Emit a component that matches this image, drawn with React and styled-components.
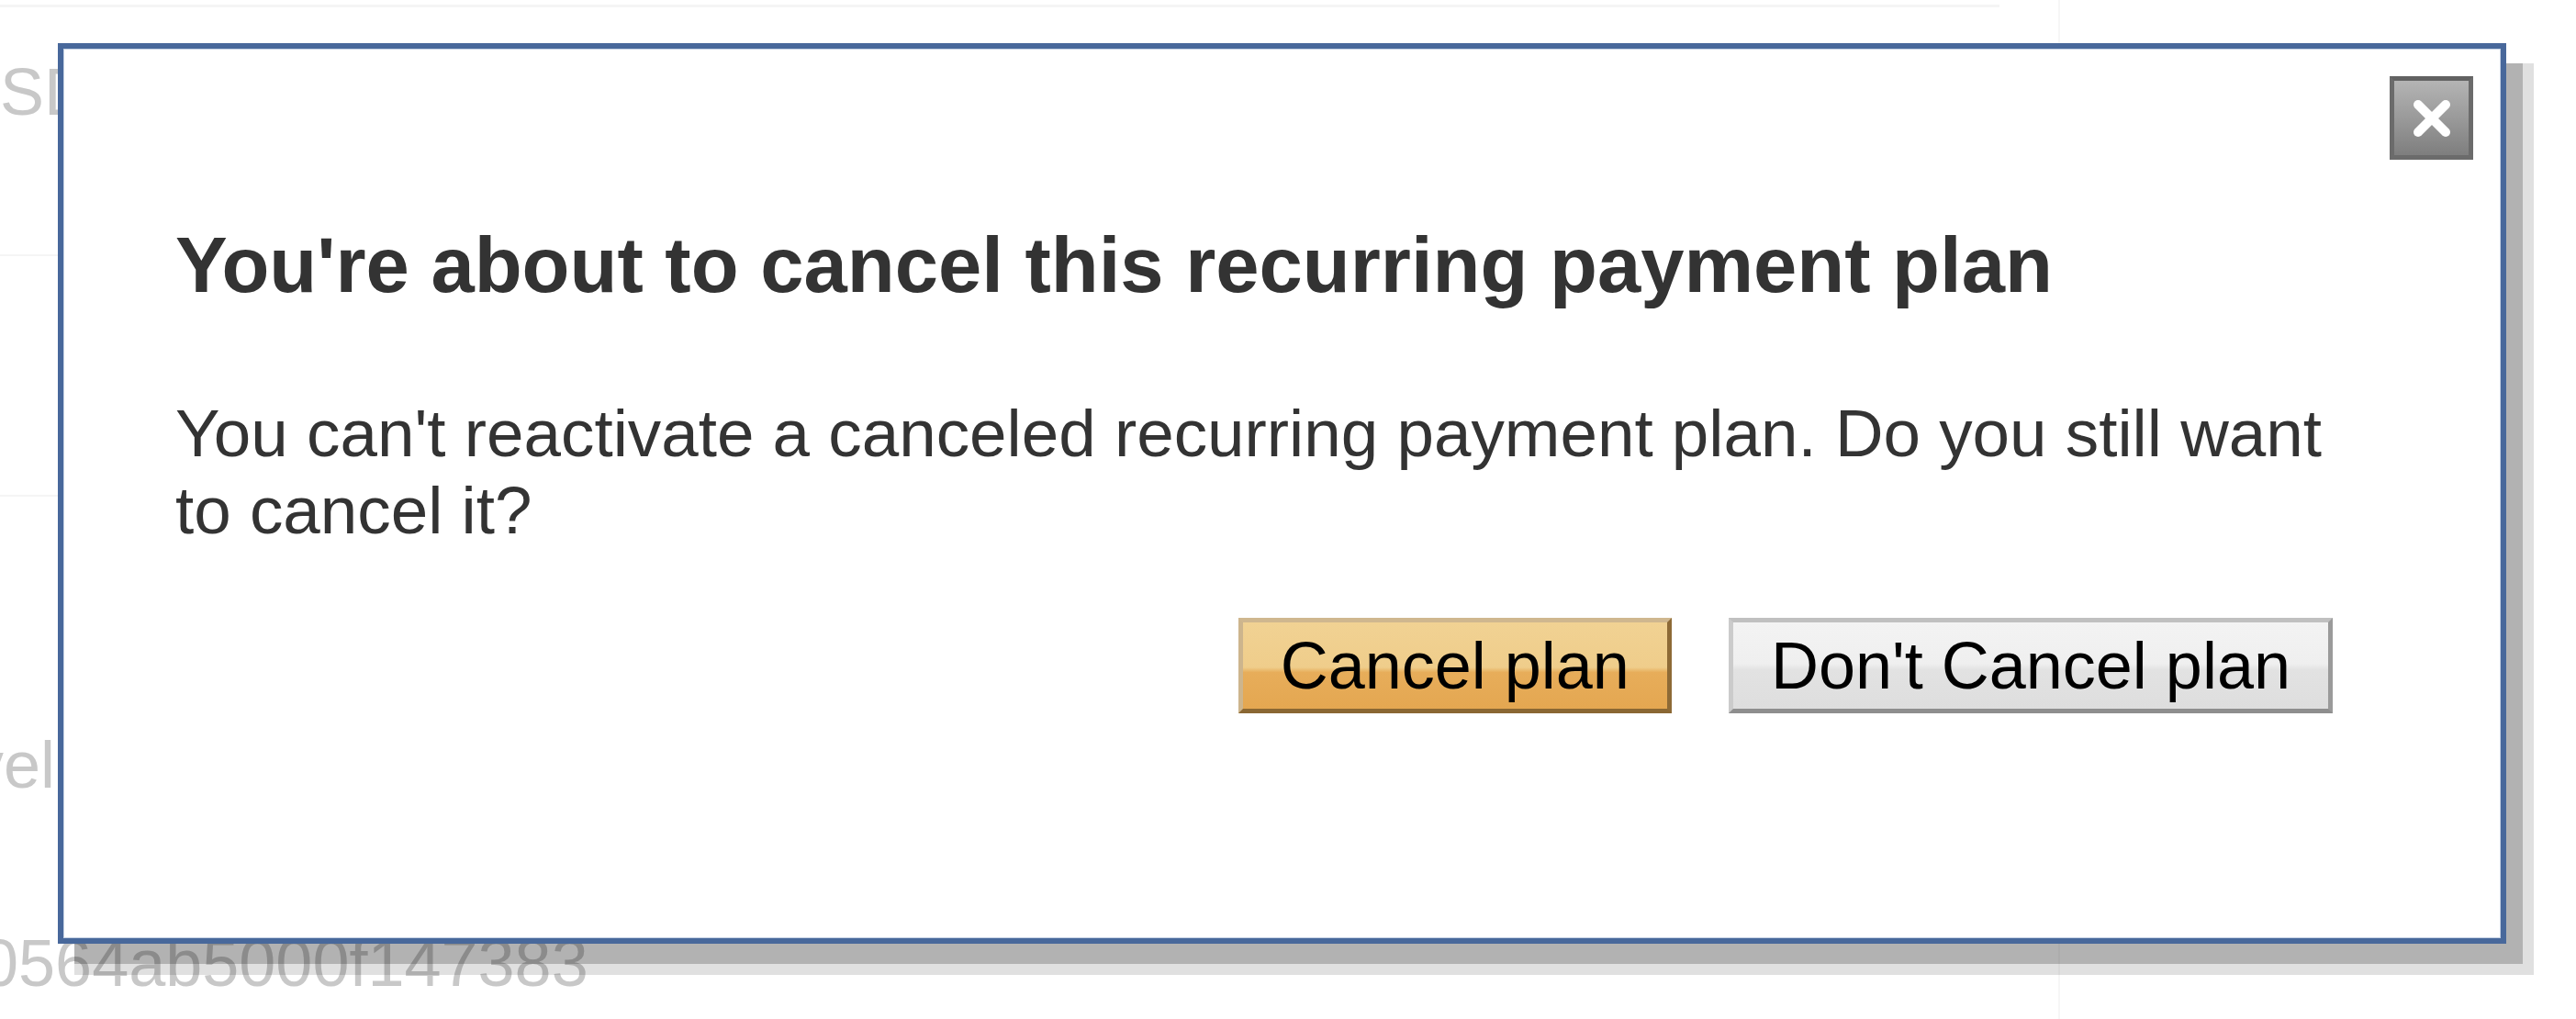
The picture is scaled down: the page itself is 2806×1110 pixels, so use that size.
import React from "react";
import styled, { createGlobalStyle } from "styled-components";

const GlobalStyle = createGlobalStyle`
  html, body { margin: 0; padding: 0; background: #ffffff; }
  body { font-family: "Liberation Sans", Arial, Helvetica, sans-serif; }
`;

const Page = styled.div`
  position: relative;
  width: 2806px;
  height: 1110px;
  overflow: hidden;
  background: #ffffff;
  display: grid;
  grid-template-columns: 2244px 1fr;
`;

const BgColumn = styled.div`
  display: flex;
  flex-direction: column;
  border-right: 2px solid #f6f6f6;
  overflow: hidden;
`;

const BgRule = styled.div`
  flex: none;
  width: ${(p) => p.$w || "100%"};
  height: ${(p) => p.$h}px;
  margin-top: ${(p) => p.$mt}px;
  background: #f5f5f5;
`;

const BgText = styled.div`
  flex: none;
  margin-top: ${(p) => p.$mt}px;
  margin-left: ${(p) => p.$ml || 0}px;
  font-size: 72px;
  line-height: 84px;
  color: #c8c8c8;
  white-space: nowrap;
`;

const Dialog = styled.div`
  position: absolute;
  left: 63px;
  top: 47px;
  width: 2667px;
  height: 981px;
  box-sizing: border-box;
  border: 6px solid #48689b;
  background: #ffffff;
  box-shadow:
    inset 0 0 0 1px #c4d0e2,
    18px 22px 0 0 rgba(0, 0, 0, 0.205),
    24px 28px 0 6px rgba(0, 0, 0, 0.12);
  padding: 30px 30px 0 30px;
  display: flex;
  flex-direction: column;
`;

const CloseRow = styled.div`
  display: flex;
  justify-content: flex-end;
`;

const CloseButton = styled.button`
  width: 91px;
  height: 91px;
  box-sizing: border-box;
  padding: 0;
  margin: 0;
  border: 5px solid #6b6b6b;
  border-top-color: #626262;
  background: linear-gradient(#b4b4b4 0%, #9a9a9a 50%, #7e7e7e 100%);
  display: grid;
  place-items: center;
  cursor: pointer;
`;

const Content = styled.div`
  display: flex;
  flex-direction: column;
  padding: 0 153px 0 92px;
`;

const Title = styled.h2`
  margin: 67px 0 0;
  font-size: 85px;
  line-height: 96px;
  font-weight: 700;
  color: #333333;
  white-space: nowrap;
`;

const Body = styled.p`
  margin: 93px 0 0;
  font-size: 72.8px;
  line-height: 84px;
  color: #333333;
`;

const ButtonRow = styled.div`
  margin-top: 75px;
  display: flex;
  justify-content: flex-end;
  gap: 62px;
`;

const ActionButton = styled.button`
  height: 104px;
  box-sizing: border-box;
  padding: 0 41px;
  margin: 0;
  font-family: inherit;
  font-size: 72px;
  line-height: 1;
  color: #000000;
  border: 5px solid;
  display: flex;
  align-items: center;
  cursor: pointer;
  border-color: ${(p) =>
    p.$primary ? "#cfb78f #8d6a36 #8a6733 #cdb58d" : "#c0c0c0 #9a9a9a #8e8e8e #cbcbcb"};
  background: ${(p) =>
    p.$primary
      ? "linear-gradient(#f1d293 0%, #efcd8b 52%, #e7ad5a 58%, #e4a751 100%)"
      : "linear-gradient(#f3f3f3 0%, #efefef 48%, #e2e2e2 55%, #dedede 100%)"};
`;

function CloseIcon() {
  return (
    <svg width="50" height="50" viewBox="0 0 50 50" aria-hidden="true">
      <g stroke="#ffffff" strokeWidth="10" strokeLinecap="round">
        <line x1="10" y1="10" x2="40" y2="40" />
        <line x1="40" y1="10" x2="10" y2="40" />
      </g>
    </svg>
  );
}

export default function App() {
  return (
    <>
      <GlobalStyle />
      <Page>
        <BgColumn>
          <BgRule $w="2178px" $h={3} $mt={5} />
          <BgText $mt={50}>SD</BgText>
          <BgRule $h={2} $mt={135} />
          <BgRule $h={2} $mt={260} />
          <BgText $mt={250} $ml={-32}>vel</BgText>
          <BgText $mt={132} $ml={-20}>0564ab5000f147383</BgText>
        </BgColumn>
        <div />
        <Dialog role="dialog" aria-modal="true">
          <CloseRow>
            <CloseButton aria-label="Close">
              <CloseIcon />
            </CloseButton>
          </CloseRow>
          <Content>
            <Title>You're about to cancel this recurring payment plan</Title>
            <Body>
              You can't reactivate a canceled recurring payment plan. Do you still want to cancel it?
            </Body>
            <ButtonRow>
              <ActionButton $primary>Cancel plan</ActionButton>
              <ActionButton>Don't Cancel plan</ActionButton>
            </ButtonRow>
          </Content>
        </Dialog>
      </Page>
    </>
  );
}
